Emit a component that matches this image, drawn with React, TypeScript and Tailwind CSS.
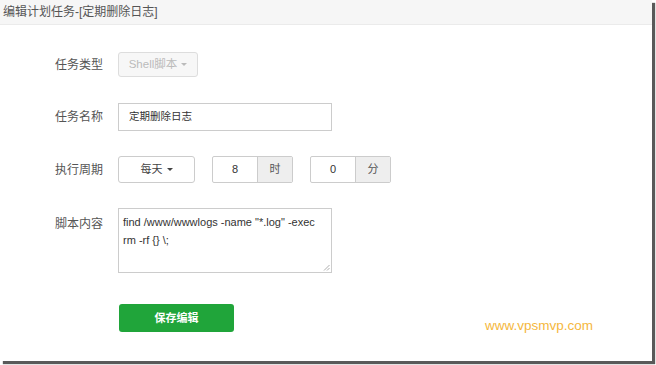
const LABEL = "w-[63px] shrink-0 text-[12px] text-[#555]"

function Row({ label, children, top = false }: { label: string; children: React.ReactNode; top?: boolean }) {
  return (
    <div className={`flex ${top ? "items-start" : "items-center"}`}>
      <div className={`${LABEL} ${top ? "pt-[7px]" : ""}`}>{label}</div>
      {children}
    </div>
  )
}

function AddonInput({ value, unit }: { value: string; unit: string }) {
  return (
    <div className="flex h-[27px] w-[81px] rounded-[2px] border border-[#ccc]">
      <div className="flex w-[44px] items-center justify-center text-[11px] text-[#333]">{value}</div>
      <div className="flex flex-1 items-center justify-center border-l border-[#ccc] bg-[#eee] text-[11px] text-[#555]">{unit}</div>
    </div>
  )
}

export default function App() {
  return (
    <div className="h-[365px] w-[656px] bg-white font-['Liberation_Sans','Noto_Sans_CJK_SC',sans-serif]">
      <div className="relative h-[361px] w-[652px] bg-white shadow-[3px_3px_1px_rgba(0,0,0,0.65)]">
        <div className="flex h-[25px] items-center border-b border-[#ebebeb] bg-[#f6f6f6] pl-[3px] text-[12px] text-[#555]">
          编辑计划任务-[定期删除日志]
        </div>

        <div className="flex flex-col pl-[55px] pt-[27px]">
          <Row label="任务类型">
            <button className="flex h-[25px] w-[80px] items-center justify-center gap-[4px] rounded-[3px] border border-[#ddd] bg-[#f7f7f7] text-[11.5px] text-[#bbb]">
              Shell脚本
              <span className="h-0 w-0 border-x-[3px] border-t-[3px] border-x-transparent border-t-[#bbb]" />
            </button>
          </Row>

          <div className="mt-[26px]">
            <Row label="任务名称">
              <div className="flex h-[28px] w-[214px] items-center border border-[#ccc] pl-[10px] text-[10.5px] text-[#333]">
                定期删除日志
              </div>
            </Row>
          </div>

          <div className="mt-[25px]">
            <Row label="执行周期">
              <button className="flex h-[27px] w-[77px] items-center justify-center gap-[4px] rounded-[3px] border border-[#ccc] bg-white text-[11px] text-[#444]">
                每天
                <span className="h-0 w-0 border-x-[3px] border-t-[3px] border-x-transparent border-t-[#444]" />
              </button>
              <div className="ml-[17px]">
                <AddonInput value="8" unit="时" />
              </div>
              <div className="ml-[17px]">
                <AddonInput value="0" unit="分" />
              </div>
            </Row>
          </div>

          <div className="mt-[25px]">
            <Row label="脚本内容" top>
              <div className="relative h-[65px] w-[214px] border border-[#ccc] px-[4px] pt-[4px] text-[11px] leading-[18px] text-[#333]">
                <div>find /www/wwwlogs -name "*.log" -exec</div>
                <div>rm -rf {"{}"} \;</div>
                <svg className="absolute bottom-[1px] right-[1px]" width="7" height="7" viewBox="0 0 7 7">
                  <path d="M6.5 1 L1 6.5 M6.5 4 L4 6.5" stroke="#999" strokeWidth="0.8" />
                </svg>
              </div>
            </Row>
          </div>

          <div className="mt-[31px] pl-[64px]">
            <button className="flex h-[28px] w-[115px] items-center justify-center rounded-[3px] bg-[#20a53a] text-[11px] font-bold text-white">
              保存编辑
            </button>
          </div>
        </div>

        <div className="absolute left-[485px] top-[316px] text-[13.5px] text-[#f5b73d]">www.vpsmvp.com</div>
      </div>
    </div>
  )
}
